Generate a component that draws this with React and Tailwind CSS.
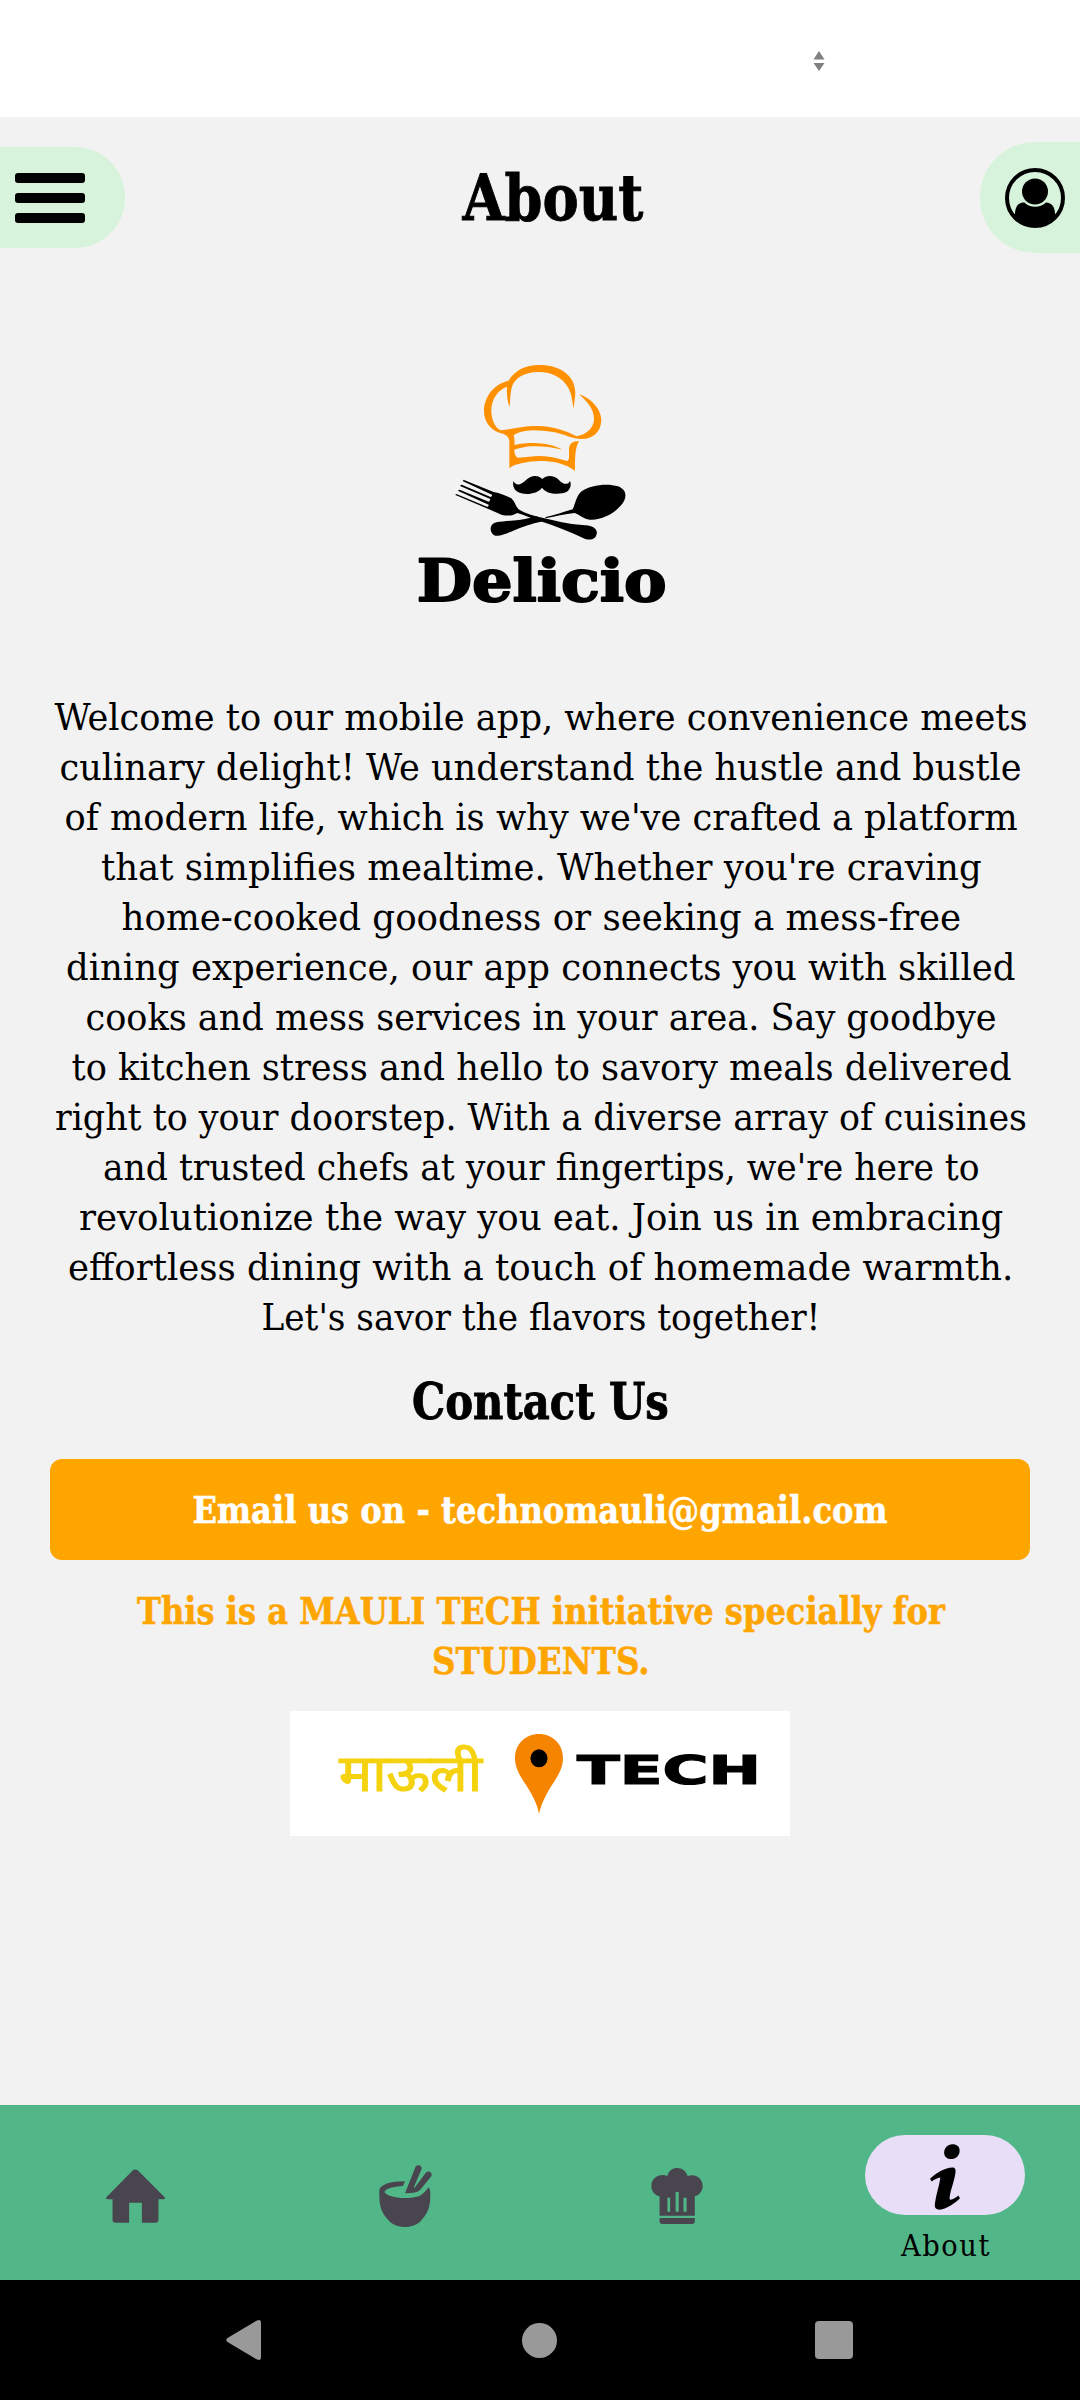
import { useLayoutEffect, useRef, useState } from "react";

const SERIF = "font-['DejaVu_Serif_Condensed','DejaVu_Serif',serif]";

/* One line of text, condensed horizontally to the given measure. */
function FitLine({ width, className = "", children }) {
  const ref = useRef(null);
  const [scale, setScale] = useState(1);
  useLayoutEffect(() => {
    setScale(width / ref.current.offsetWidth);
  }, [width]);
  return (
    <span className="flex justify-center" style={{ width }}>
      <span
        ref={ref}
        className={`inline-block shrink-0 whitespace-nowrap ${className}`}
        style={{ transform: `scaleX(${scale})` }}
      >
        {children}
      </span>
    </span>
  );
}

const INTRO = [
  ["Welcome to our mobile app, where convenience meets", 973],
  ["culinary delight! We understand the hustle and bustle", 962],
  ["of modern life, which is why we've crafted a platform", 953],
  ["that simplifies mealtime. Whether you're craving", 881],
  ["home-cooked goodness or seeking a mess-free", 840],
  ["dining experience, our app connects you with skilled", 949],
  ["cooks and mess services in your area. Say goodbye", 911],
  ["to kitchen stress and hello to savory meals delivered", 940],
  ["right to your doorstep. With a diverse array of cuisines", 972],
  ["and trusted chefs at your fingertips, we're here to", 876],
  ["revolutionize the way you eat. Join us in embracing", 924],
  ["effortless dining with a touch of homemade warmth.", 945],
  ["Let's savor the flavors together!", 559],
];

function DelicioLogo() {
  return (
    <svg className="h-[280px] w-[290px]" viewBox="0 0 870 840">
      <g fill="#ff9100">
        <path d="M329 201 C321 184 320 160 321 140 C288 152 273 184 274 216 C276 246 288 264 302 271 C352 264 380 257 414 258 C462 259 496 272 530 289 C562 282 582 262 582 236 C581 205 560 183 537 163 C574 175 604 208 604 242 C602 276 578 297 545 297 C530 297 520 293 508 290 C470 276 440 272 400 271 C372 272 352 277 341 286 C344 297 344 306 343 315 C372 309 402 308 432 311 C458 315 476 322 487 329 C452 320 418 317 392 319 C372 321 356 325 343 329 C343 340 345 348 353 353 C378 352 398 348 420 348 C448 348 476 356 501 363 C509 361 507 348 507 329 C507 311 518 303 537 303 C525 324 525 352 525 392 C496 370 456 363 420 363 C384 364 346 370 328 385 L328 303 C327 291 320 286 309 281 C272 274 252 245 252 213 C252 170 283 131 325 123 C343 92 376 75 418 75 C482 75 528 108 526 163 C524 178 523 191 521 205 C516 184 517 166 504 142 C487 112 452 95 414 96 C373 96 343 115 335 143 C330 163 331 181 329 201 Z" />
      </g>
      <g fill="#000">
        <path d="M427 417 C440 404 462 405 476 419 C488 433 504 437 510 422 C517 441 506 457 487 460 C463 464 438 460 426 443 C414 459 388 465 364 460 C344 455 337 441 340 423 C347 437 361 436 374 424 C392 406 412 403 427 417 Z" />
        <path d="M190 419 L281 456 C302 460 319 467 334 475 C348 489 345 500 359 510 C378 521 400 528 427 533 C466 542 505 552 547 555 C577 555 594 566 590 582 C587 598 571 602 554 596 C511 577 466 557 422 544 C396 536 374 525 352 519 C334 530 310 529 291 518 L168 466 Q164 462 169 462 L261 500 Q266 502 266 494 L175 453 Q174 449 179 449 L266 485 Q270 484 271 477 L182 439 Q179 434 185 434 L272 471 Q277 469 276 464 L189 424 Z" />
        <path d="M434 532 C464 525 491 516 518 508 C526 493 527 470 545 454 C572 435 621 429 654 439 C682 449 683 475 661 498 C640 522 603 541 570 539 C548 536 538 523 524 519 C493 522 466 530 440 534 Z" />
        <path d="M392 533 C356 543 319 541 289 547 C269 551 267 575 281 585 C294 592 313 583 333 575 C363 563 393 551 429 544 L410 529 Z" />
      </g>
      <text
        x="50"
        y="783"
        textLength="750"
        lengthAdjust="spacingAndGlyphs"
        className="font-['DejaVu_Serif',serif] text-[176px] font-bold"
        stroke="#000"
        strokeWidth="6"
        strokeLinejoin="round"
      >
        Delicio
      </text>
    </svg>
  );
}

function MauliTechLogo() {
  return (
    <svg className="h-[125px] w-[500px] bg-white" viewBox="0 0 500 125">
      <text
        x="49"
        y="80"
        textLength="143"
        lengthAdjust="spacingAndGlyphs"
        fill="#f5d20f"
        stroke="#f5d20f"
        strokeWidth="1.2"
        className="font-['Noto_Sans_Devanagari','Noto_Sans',sans-serif] text-[51px]"
      >
        माऊली
      </text>
      <path
        d="M249 23 C262.500 23 273 33 273 47 C273 56 269 63 264 71 C256 83 251.500 92 249 103 C247 92 242 83 234 71 C229 63 225 56 225 47 C225 33 235.500 23 249 23 Z"
        fill="#f58500"
      />
      <ellipse cx="249" cy="47.300" rx="8.500" ry="9" fill="#000" />
      <text
        x="287"
        y="72.500"
        textLength="184"
        lengthAdjust="spacingAndGlyphs"
        className="font-['DejaVu_Sans',sans-serif] text-[39px] font-bold"
        stroke="#000"
        strokeWidth="1.2"
      >
        TECH
      </text>
    </svg>
  );
}

function HomeIcon() {
  return (
    <svg className="h-[54px] w-[59px]" viewBox="308 238 171 162" preserveAspectRatio="none" fill="#49454f">
      <path d="M386 242 Q393 237 400 242 L478 323 Q481 329 474 329 H460 V391 Q460 399 452 399 H412 V339 H375 V399 H335 Q327 399 327 391 V329 H313 Q306 329 309 323 Z" />
    </svg>
  );
}

function BowlIcon() {
  return (
    <svg className="h-[62px] w-[53px]" viewBox="1101 227 153 186" preserveAspectRatio="none" fill="#49454f">
      <path d="M1176 276 L1170 290 C1144 291 1118 299 1117 308 C1121 319 1148 326 1174 326 C1192 326 1208 324 1219 319 C1229 313 1237 304 1244 294 Q1249 300 1249 308 C1250 350 1245 370 1219 398 C1196 418 1156 418 1133 398 C1106 370 1101 350 1102 303 C1103 286 1135 276 1176 276 Z" />
      <path d="M1176 312 L1206 234 C1211 224 1226 227 1224 239 L1202 293 L1203 297 L1236 250 C1243 242 1257 249 1252 261 L1222 299 C1214 310 1198 311 1176 312 Z" />
    </svg>
  );
}

function ChefHatIcon() {
  return (
    <svg className="h-[56px] w-[52px]" viewBox="321 234 152 168" preserveAspectRatio="none" fill="#49454f">
      <path
        fillRule="evenodd"
        d="M369 258 C373 242 384 234 398 234 C412 234 424 243 428 258 C450 250 472 264 472 287 C472 303 463 315 449 319 V377 H346 V319 C331 315 322 303 322 287 C322 264 346 249 369 258 Z M369 323 V365 H377 V323 Z M393 306 V365 H402 V306 Z M416 323 V365 H425 V323 Z"
      />
      <path d="M346 384 H449 V394 Q449 402 441 402 H354 Q346 402 346 394 Z" />
    </svg>
  );
}

function InfoIcon() {
  return (
    <svg className="h-[66px] w-[30px]" viewBox="1134 167 87 197" preserveAspectRatio="none" fill="#000">
      <path d="M1199 168 C1212 168 1220 175 1220 187 C1220 201 1209 212 1195 212 C1183 212 1175 204 1175 193 C1175 179 1185 168 1199 168 Z" />
      <path d="M1134 271 C1154 251 1178 238 1199 237 C1207 237 1209 243 1208 252 C1204 282 1190 312 1191 333 C1200 334 1209 327 1216 321 L1221 329 C1203 347 1181 361 1162 363 C1151 363 1147 357 1148 346 C1151 319 1161 292 1164 267 C1155 268 1147 273 1139 279 Z" />
    </svg>
  );
}

function ProfileIcon() {
  return (
    <svg className="h-[60px] w-[60px]" viewBox="0 0 60 60">
      <circle cx="30" cy="30" r="28" fill="none" stroke="#000" strokeWidth="4" />
      <circle cx="30" cy="23.500" r="13" />
      <path d="M19.500 34.500 Q24 38.800 30 38.800 Q36 38.800 41 34.500 C47 34.500 50 39.500 50 46 L52 46 C47 55 39 59 30 59 C21 59 13 55 8 46 L10 46 C10 39.500 13 34 19.500 34.500 Z" />
    </svg>
  );
}

export default function App() {
  return (
    <div className={`flex h-[2400px] w-[1080px] flex-col overflow-hidden bg-[#f2f2f2] text-black ${SERIF}`}>
      <div className="flex h-[117px] shrink-0 justify-end bg-white pt-[51px] pr-[255px]">
        <svg className="h-5 w-[12px]" viewBox="0 0 12 20" fill="#808080">
          <path d="M6 0 L11.500 8.500 H0.500 Z M0.500 12 H11.500 L6 20 Z" />
        </svg>
      </div>

      <header className="mt-[25px] flex h-[111px] shrink-0 items-center justify-between">
        <button className="flex h-[101px] w-[125px] flex-col justify-center gap-[10px] rounded-r-[50px] bg-[#d8f3dc] pl-[15px]">
          <span className="h-[10px] w-[70px] rounded-[3px] bg-black" />
          <span className="h-[10px] w-[70px] rounded-[3px] bg-black" />
          <span className="h-[10px] w-[70px] rounded-[3px] bg-black" />
        </button>
        <h1 className="text-[64px] leading-[80px] font-bold [-webkit-text-stroke:0.8px_currentColor]">
          <FitLine width={181}>About</FitLine>
        </h1>
        <button className="flex h-[111px] w-[100px] items-center rounded-l-[55px] bg-[#d8f3dc] pl-[25px]">
          <ProfileIcon />
        </button>
      </header>

      <main className="flex grow flex-col items-center pt-[87px]">
        <div className="pl-[10px]">
          <DelicioLogo />
        </div>
        <p className="mt-[73px] flex flex-col items-center pl-0.5 text-[37px] leading-[50px]">
          {INTRO.map(([line, width]) => (
            <FitLine key={line} width={width}>
              {line}
            </FitLine>
          ))}
        </p>
        <h2 className="mt-[29px] text-[50px] leading-[60px] font-bold [-webkit-text-stroke:0.8px_currentColor]">
          <FitLine width={257}>Contact Us</FitLine>
        </h2>
        <a className="mt-[27px] flex h-[101px] w-[980px] items-center justify-center rounded-xl bg-[#ffa500] text-[38px] leading-[50px] font-bold text-white [-webkit-text-stroke:0.5px_currentColor]">
          <FitLine width={695}>Email us on - technomauli@gmail.com</FitLine>
        </a>
        <p className="mt-[26px] flex flex-col items-center pl-0.5 text-[38px] leading-[50px] font-bold text-[#ffa500] [-webkit-text-stroke:0.5px_currentColor]">
          <FitLine width={808}>This is a MAULI TECH initiative specially for</FitLine>
          <FitLine width={218}>STUDENTS.</FitLine>
        </p>
        <div className="mt-[25px]">
          <MauliTechLogo />
        </div>
      </main>

      <nav className="grid h-[175px] shrink-0 grid-cols-4 bg-[#52b788]">
        <div className="flex items-center justify-center pt-[7px]">
          <HomeIcon />
        </div>
        <div className="flex items-center justify-center pt-[7px]">
          <BowlIcon />
        </div>
        <div className="flex items-center justify-center pt-[7px] pl-1">
          <ChefHatIcon />
        </div>
        <div className="flex flex-col items-center pt-[30px]">
          <div className="flex h-20 w-40 items-center justify-center rounded-full bg-[#e8def8] pt-[3px]">
            <InfoIcon />
          </div>
          <div className="mt-[11px] pl-0.5 text-[29px] leading-10">
            <FitLine width={90} className="tracking-[1.5px]">
              About
            </FitLine>
          </div>
        </div>
      </nav>

      <div className="flex h-[120px] shrink-0 items-center justify-between bg-black pr-[227px] pl-[226px]">
        <svg className="h-10 w-[35px]" viewBox="0 0 35 40" fill="#999">
          <path d="M31 0.500 Q35 -1 35 3 V37 Q35 41 31 39.500 L1.500 22 Q-1 20 1.500 18 Z" />
        </svg>
        <span className="ml-[3px] h-[35px] w-[35px] rounded-full bg-[#999]" />
        <span className="h-[38px] w-[38px] rounded-[4px] bg-[#999]" />
      </div>
    </div>
  );
}
